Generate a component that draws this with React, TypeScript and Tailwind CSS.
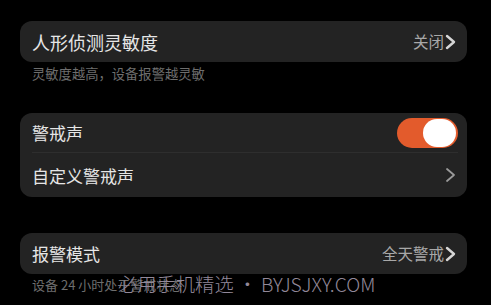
import React from 'react';

const Chevron = ({ bold = false }: { bold?: boolean }) => (
  <svg width="11" height="16" viewBox="0 0 11 16" fill="none" className="shrink-0">
    <path
      d="M2 2 L9 8 L2 14"
      stroke={bold ? '#d6d6d6' : '#9a9a9a'}
      strokeWidth={bold ? 2.4 : 1.8}
      strokeLinecap="round"
      strokeLinejoin="round"
    />
  </svg>
);

export default function App() {
  return (
    <div
      className="w-[491px] h-[305px] bg-black overflow-hidden relative"
      style={{ fontFamily: '"Noto Sans CJK SC", "Noto Sans", sans-serif' }}
    >
      <div className="pl-5 pr-6 pt-[21px] flex flex-col">
        {/* 人形侦测灵敏度 */}
        <div className="h-[41px] rounded-xl bg-[#232323] flex items-center justify-between pl-3 pr-[11px]">
          <span className="text-[18px] text-[#e6e6e6] leading-none">人形侦测灵敏度</span>
          <div className="flex items-center gap-[1px]">
            <span className="text-[15.5px] text-[#a8a8a8] leading-none">关闭</span>
            <Chevron bold />
          </div>
        </div>
        <div className="pl-3 pt-[3px] text-[13.3px] text-[#6e6e6e] leading-[18px]">
          灵敏度越高，设备报警越灵敏
        </div>

        {/* 警戒声 */}
        <div className="mt-[30px] h-[84px] rounded-xl bg-[#232323] flex flex-col pl-3 pr-[9px]">
          <div className="h-[40px] flex items-center justify-between border-b border-[#2e2e2e]">
            <span className="text-[17px] text-[#e6e6e6] leading-none">警戒声</span>
            <div className="w-[61px] h-[30px] rounded-full bg-[#e35b2c] flex items-center justify-end pr-[2px]">
              <div className="w-[33px] h-[28px] rounded-full bg-white" />
            </div>
          </div>
          <div className="flex-1 flex items-center justify-between pr-[2px]">
            <span className="text-[17px] text-[#e6e6e6] leading-none">自定义警戒声</span>
            <Chevron />
          </div>
        </div>

        {/* 报警模式 */}
        <div className="mt-[36px] h-[41px] rounded-xl bg-[#232323] flex items-center justify-between pl-3 pr-[11px]">
          <span className="text-[17px] text-[#e6e6e6] leading-none">报警模式</span>
          <div className="flex items-center gap-[1px]">
            <span className="text-[15.5px] text-[#a8a8a8] leading-none">全天警戒</span>
            <Chevron bold />
          </div>
        </div>
        <div className="pl-3 pt-[2px] text-[13px] text-[#6e6e6e] leading-[18px]">
          设备 24 小时处于警戒状态
        </div>
      </div>

      {/* watermark */}
      <div className="absolute left-[118px] top-[271px] text-[19.3px] font-light leading-[26px] text-[#928899] whitespace-nowrap">
        必用手机精选<span className="mx-[4px]">•</span>BYJSJXY.COM
      </div>
    </div>
  );
}
